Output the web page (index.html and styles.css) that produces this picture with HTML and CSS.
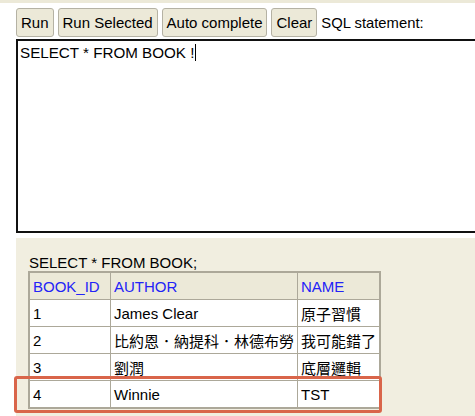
FILE: index.html
```html
<!DOCTYPE html>
<html>
<head>
<meta charset="utf-8">
<link rel="stylesheet" href="styles.css">
</head>
<body>
<div class="strip"></div>
<div class="toolbar">
  <button class="btn">Run</button>
  <button class="btn">Run Selected</button>
  <button class="btn">Auto complete</button>
  <button class="btn">Clear</button>
  <span class="label">SQL statement:</span>
</div>
<div class="editor">SELECT * FROM BOOK !<span class="caret"></span></div>
<div class="result">
  <div class="query">SELECT * FROM BOOK;</div>
  <table class="grid">
    <tr class="head"><th class="c1">BOOK_ID</th><th class="c2">AUTHOR</th><th class="c3">NAME</th></tr>
    <tr><td>1</td><td>James Clear</td><td>原子習慣</td></tr>
    <tr><td>2</td><td>比約恩．納提科．林德布勞</td><td>我可能錯了</td></tr>
    <tr><td>3</td><td>劉潤</td><td>底層邏輯</td></tr>
    <tr><td>4</td><td>Winnie</td><td>TST</td></tr>
  </table>
  <div class="status">(4 row(s), 1 ms)</div>
</div>
<div class="highlight"></div>
</body>
</html>
```
FILE: styles.css
```css
html, body {
  margin: 0;
  padding: 0;
  background: #ffffff;
  overflow: hidden;
  font-family: "Liberation Sans", Arial, "Noto Sans CJK TC", sans-serif;
  font-size: 15px;
  color: #000;
}
body {
  width: 475px;
  height: 416px;
  position: relative;
}
.strip {
  height: 3px;
  background: #ece9d8;
}
.toolbar {
  display: flex;
  align-items: center;
  gap: 4px;
  padding: 5px 0 0 16px;
  height: 29px;
}
.btn {
  height: 29px;
  padding: 0 4px;
  margin: 0;
  background: #ece9d8;
  border: 1px solid #b5b2a4;
  border-radius: 3px;
  font-family: "Liberation Sans", Arial, sans-serif;
  font-size: 15px;
  color: #000;
}
.label {
  font-size: 14.8px;
}
.editor {
  margin: 2px 0 0 16px;
  width: 480px;
  border: 2px solid #111;
  background: #fff;
  padding: 3px 2px;
  box-sizing: border-box;
  height: 194px;
  font-size: 15.2px;
  line-height: 17px;
}
.caret {
  display: inline-block;
  width: 1px;
  height: 17px;
  background: #000;
  vertical-align: top;
  margin-left: 1px;
}
.result {
  margin: 5px 0 0 16px;
  background: #f1eee0;
  padding: 16px 12px 0 13px;
  height: 200px;
}
.query {
  line-height: 18px;
}
.grid {
  border-collapse: collapse;
  border: 2px solid #aca899;
  margin-left: -1px;
  margin-top: -1px;
}
.grid th, .grid td {
  border: 1px solid #aca899;
  padding: 0 3px;
  height: 26px;
  text-align: left;
  font-weight: normal;
  font-size: 15px;
  font-family: "Liberation Sans", Arial, "Noto Sans CJK TC", sans-serif;
  white-space: nowrap;
}
.grid td {
  background: #fff;
}
.grid th {
  background: #ece9d8;
  color: #2323f7;
}
.c1 { width: 74px; }
.c2 { width: 179px; }
.c3 { width: 73px; }
.status {
  margin-top: 6px;
  line-height: 18px;
}
.highlight {
  position: absolute;
  left: 14px;
  top: 376px;
  width: 362px;
  height: 31px;
  border: 3px solid #d9654a;
  border-radius: 3px;
}
```
